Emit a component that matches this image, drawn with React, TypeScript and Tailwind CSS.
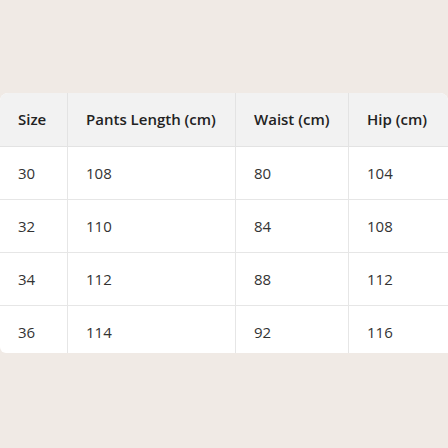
const sizeRows = [
  { size: "30", length: "108", waist: "80", hip: "104" },
  { size: "32", length: "110", waist: "84", hip: "108" },
  { size: "34", length: "112", waist: "88", hip: "112" },
  { size: "36", length: "114", waist: "92", hip: "116" },
];

const headers = ["Size", "Pants Length (cm)", "Waist (cm)", "Hip (cm)"];
const columnWidths = ["w-[68px] shrink-0", "w-[168px] shrink-0", "w-[113px] shrink-0", "flex-1"];

export default function App() {
  return (
    <div
      className="h-[448px] w-[448px] bg-[#f0eae5] pt-[93px]"
      style={{ fontFamily: '"Open Sans", "Noto Sans", sans-serif' }}
    >
      <div className="h-[260px] overflow-hidden rounded-t-lg rounded-bl-md bg-white">
        <div className="flex h-[54px] border-b border-[#e3e3e3] bg-[#f2f2f2]">
          {headers.map((header, index) => (
            <div
              key={header}
              className={`${columnWidths[index]} flex items-center whitespace-nowrap px-[18px] text-[15px] font-semibold text-[#222222] ${
                index < 3 ? "border-r border-[#e3e3e3]" : ""
              }`}
            >
              {header}
            </div>
          ))}
        </div>

        {sizeRows.map((row) => (
          <div key={row.size} className="flex h-[53px] border-b border-[#e6e6e6]">
            {[row.size, row.length, row.waist, row.hip].map((value, index) => (
              <div
                key={index}
                className={`${columnWidths[index]} flex items-center whitespace-nowrap px-[18px] text-[15px] text-[#333333] ${
                  index < 3 ? "border-r border-[#e6e6e6]" : ""
                }`}
              >
                {value}
              </div>
            ))}
          </div>
        ))}
      </div>
    </div>
  );
}
